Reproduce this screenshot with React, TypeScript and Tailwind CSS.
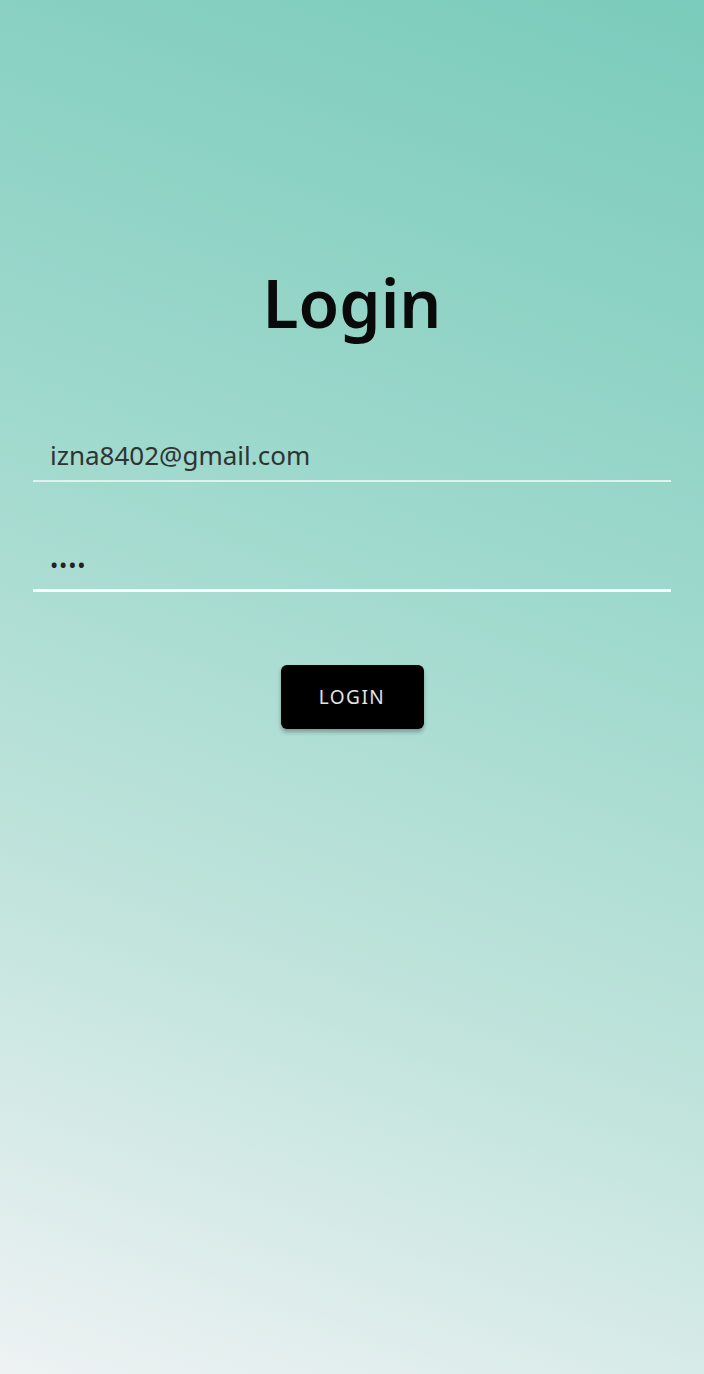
export default function App() {
  return (
    <div
      className="min-h-[1374px] w-full bg-[linear-gradient(200deg,#7acbbb_0%,#9fd9cd_40%,#c2e4dd_70%,#eef2f3_100%)] px-[33px] pt-[262px]"
      style={{ fontFamily: '"Noto Sans", "Open Sans", sans-serif' }}
    >
      {/* Title */}
      <h1 className="text-center text-[66px] font-semibold leading-[80px] text-[#0a0a0a]">Login</h1>

      {/* Form */}
      <div className="mt-[96px] flex flex-col">
        <div className="border-b-2 border-[#e2f1ee] pb-[8px] pl-[17px]">
          <span className="text-[26px] leading-[34px] text-[#2f3433]">izna8402@gmail.com</span>
        </div>
        <div className="mt-[72px] flex items-center border-b-[3px] border-[#f8fbfa] pb-[15px] pl-[17px]">
          <span className="text-[22px] leading-[20px] tracking-[0.8px] text-[#1f2322]">••••</span>
        </div>
      </div>

      {/* Button */}
      <div className="mt-[73px] flex justify-center">
        <button className="h-[64px] w-[143px] rounded-[6px] bg-black text-[19px] tracking-[1.5px] text-[#e4e4e4] shadow-[0_3px_4px_rgba(0,0,0,0.3)]">
          LOGIN
        </button>
      </div>
    </div>
  );
}
